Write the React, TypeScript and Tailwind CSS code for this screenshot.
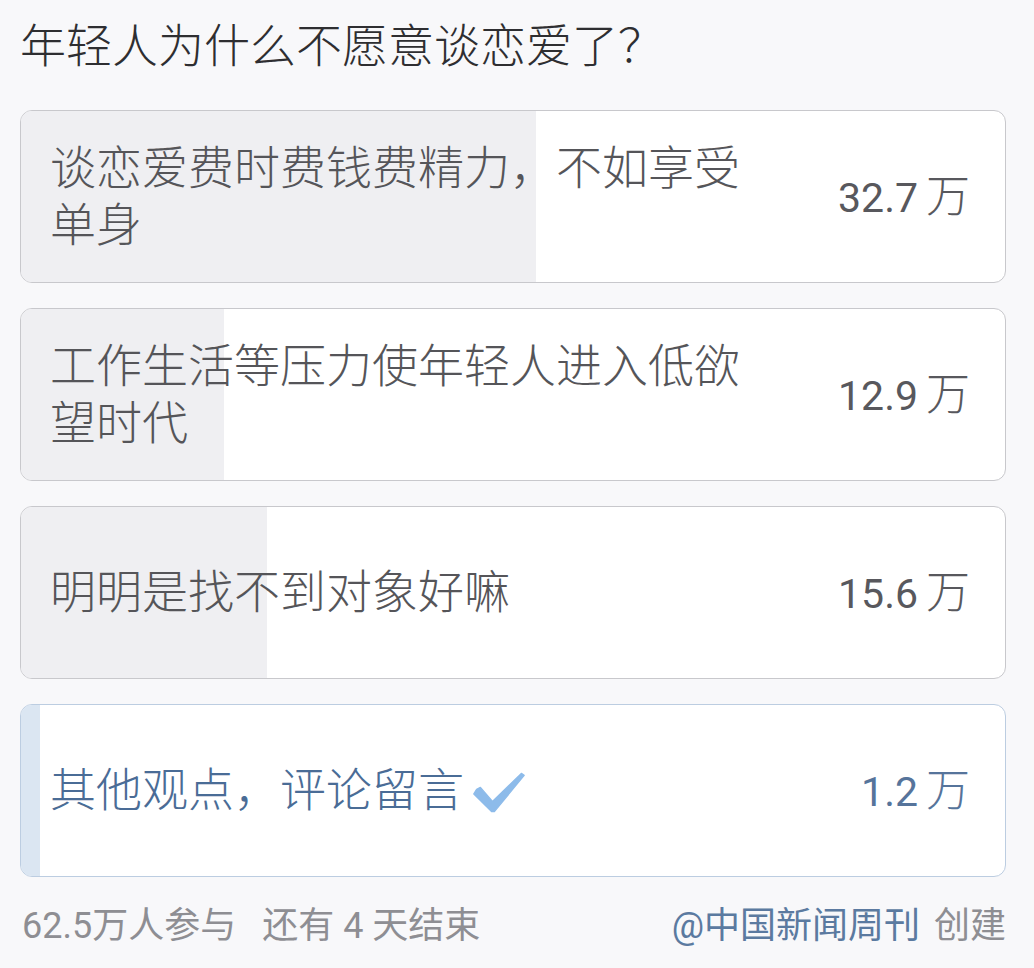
import React from "react";

type Opt = { text: string; count: number; label: string; selected?: boolean };

const TOTAL = 62.5;
const options: Opt[] = [
  { text: "谈恋爱费时费钱费精力，不如享受单身", count: 32.7, label: "32.7" },
  { text: "工作生活等压力使年轻人进入低欲望时代", count: 12.9, label: "12.9" },
  { text: "明明是找不到对象好嘛", count: 15.6, label: "15.6" },
  { text: "其他观点，评论留言", count: 1.2, label: "1.2", selected: true },
];

const font = { fontFamily: 'Roboto, "Noto Sans CJK SC", "Noto Sans", sans-serif' };

function Check() {
  return (
    <svg width="54" height="46" viewBox="0 0 58 48" className="ml-[8px] mt-[4px] shrink-0">
      <path
        d="M5 20 L9 18 L22 33 L53 3 L56 5 L24 44 L21 44 L2 25 Z"
        fill="#8dbbea"
        stroke="#8dbbea"
        strokeWidth="1.5"
        strokeLinejoin="round"
      />
    </svg>
  );
}

export default function App() {
  return (
    <div className="min-h-[968px] w-[1034px] bg-[#f8f8fa]" style={font}>
      <div className="pl-[20px] pr-[28px]">
        <div className="pt-[16px] text-[46px] font-light leading-[60px] text-[#2e2e31]">
          年轻人为什么不愿意谈恋爱了？
        </div>
        <div className="mt-[34px] flex flex-col gap-[25px]">
          {options.map((o) => (
            <div
              key={o.text}
              className={
                o.selected
                  ? "relative flex h-[173px] items-center overflow-hidden rounded-[12px] border-[1.5px] border-[#bccde1] bg-white"
                  : "relative flex h-[173px] items-center overflow-hidden rounded-[12px] border-[1.5px] border-[#c8c8cc] bg-white"
              }
            >
              <div
                className={
                  o.selected
                    ? "absolute inset-y-0 left-0 bg-[#dbe6f2]"
                    : "absolute inset-y-0 left-0 bg-[#efeff2]"
                }
                style={{ width: `${(o.count / TOTAL) * 100}%` }}
              />
              <div className="relative flex w-full items-center justify-between pl-[29px] pr-[35px]">
                <div
                  className={
                    o.selected
                      ? "flex max-w-[712px] items-center text-[46px] font-light leading-[57px] text-[#4a6c96]"
                      : "flex max-w-[712px] items-center text-[46px] font-light leading-[57px] text-[#555559]"
                  }
                >
                  <span>{o.text}</span>
                  {o.selected && <Check />}
                </div>
                <div
                  className={
                    o.selected
                      ? "shrink-0 whitespace-nowrap text-[41px] text-[#56749b]"
                      : "shrink-0 whitespace-nowrap text-[41px] text-[#58585d]"
                  }
                >
                  {o.label}
                  <span className="ml-[8px] text-[44px] font-light">万</span>
                </div>
              </div>
            </div>
          ))}
        </div>
        <div className="mt-[24px] flex h-[50px] items-center justify-between pl-[2px] text-[36px]">
          <div className="flex items-center gap-[26px] text-[#8e8e93]">
            <span>62.5万人参与</span>
            <span>还有 4 天结束</span>
          </div>
          <div className="flex items-center gap-[14px]">
            <span className="text-[#5b7aa0]">@中国新闻周刊</span>
            <span className="text-[#8e8e93]">创建</span>
          </div>
        </div>
      </div>
    </div>
  );
}
